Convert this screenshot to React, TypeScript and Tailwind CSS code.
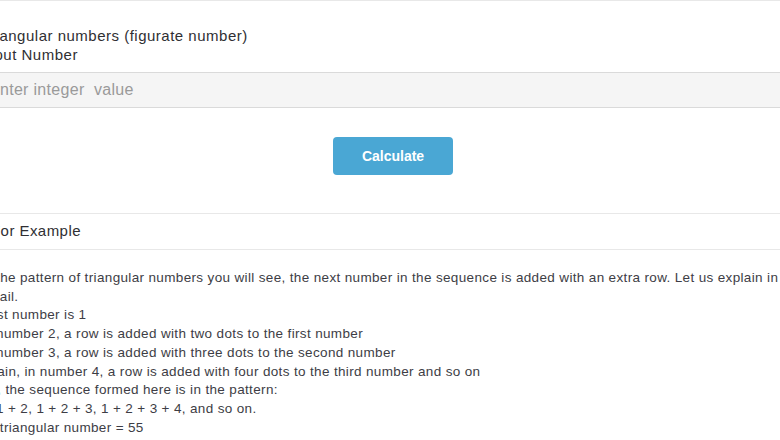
import React from 'react'

const lines = [
    'In the pattern of triangular numbers you will see, the next number in the sequence is added with an extra row. Let us explain in',
    'detail.',
    'First number is 1',
    'In number 2, a row is added with two dots to the first number',
    'In number 3, a row is added with three dots to the second number',
    'Again, in number 4, a row is added with four dots to the third number and so on',
    'So, the sequence formed here is in the pattern:',
    '1, 1 + 2, 1 + 2 + 3, 1 + 2 + 3 + 4, and so on.',
    '10 triangular number = 55'
]

const App = () => {
    return (
        <div className="w-[780px] h-[440px] overflow-hidden bg-white text-[#333] font-['Liberation_Sans',Arial,sans-serif]">
            <div className="border-t border-[#e8e8e8]" />
            <div className="-ml-[17px] w-[820px]">
                {/* calculator */}
                <div className="pt-[25px] -ml-[2px] text-[15px] leading-[19px] tracking-[0.5px] text-[#2f2f33]">
                    <p>Triangular numbers (figurate number)</p>
                    <p>Input Number</p>
                </div>
                <input
                    type="text"
                    placeholder="Enter integer  value"
                    className="mt-[8px] block w-full h-[36px] pl-[6px] bg-[#f5f5f5] border-y border-[#dadada] text-[16px] tracking-[0.3px] placeholder:text-[#9a9a9a] outline-none"
                />
                <div className="flex justify-center mt-[29px]">
                    <button
                        type="button"
                        className="w-[120px] h-[38px] rounded-[4px] bg-[#4aa7d4] text-white text-[14px] font-semibold"
                    >
                        Calculate
                    </button>
                </div>

                {/* example */}
                <div className="mt-[38px] h-[37px] flex items-center pl-[8px] border-y border-[#e8e8e8] text-[15px] tracking-[0.45px] text-[#2f2f33]">
                    For Example
                </div>
                <div className="pt-[19px] -ml-[3px] text-[13.5px] leading-[18.7px] tracking-[0.35px] text-[#3d3d45]">
                    {lines.map((line, i) => (
                        <p key={i} className="whitespace-nowrap">{line}</p>
                    ))}
                </div>
            </div>
        </div>
    )
}

export default App
